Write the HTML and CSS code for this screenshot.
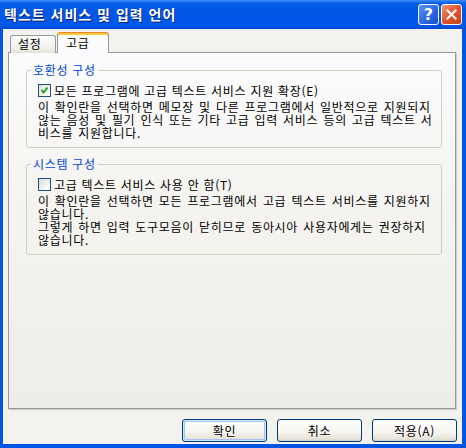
FILE: index.html
```html
<!DOCTYPE html>
<html lang="ko">
<head>
    <meta charset="utf-8">
    <title>텍스트 서비스 및 입력 언어</title>
    <link rel="stylesheet" href="styles.css">
</head>
<body>
    <div class="window">
        <div class="titlebar">
            <span class="title">텍스트 서비스 및 입력 언어</span>
            <div class="caption-buttons">
                <button class="cap help">?</button>
                <button class="cap close">
                    <svg width="21" height="21" viewBox="0 0 21 21">
                        <path d="M6 6 L15 15 M15 6 L6 15" stroke="#fff" stroke-width="2.2" stroke-linecap="square"/>
                    </svg>
                </button>
            </div>
        </div>

        <div class="client">
            <div class="tabs">
                <div class="tab">설정</div>
                <div class="tab selected">고급</div>
            </div>

            <div class="panel">
                <fieldset class="group">
                    <legend>호환성 구성</legend>
                    <div class="group-body">
                        <label class="check">
                            <span class="box">
                                <svg width="11" height="11" viewBox="0 0 11 11">
                                    <path d="M2.5 5 L4.5 7.5 L8.5 2.5" fill="none" stroke="#21a121" stroke-width="2"/>
                                </svg>
                            </span>
                            모든 프로그램에 고급 텍스트 서비스 지원 확장(E)
                        </label>
                        <p>이 확인란을 선택하면 메모장 및 다른 프로그램에서 일반적으로 지원되지<br>않는 음성 및 필기 인식 또는 기타 고급 입력 서비스 등의 고급 텍스트 서<br>비스를 지원합니다.</p>
                    </div>
                </fieldset>

                <fieldset class="group">
                    <legend>시스템 구성</legend>
                    <div class="group-body">
                        <label class="check">
                            <span class="box"></span>
                            고급 텍스트 서비스 사용 안 함(T)
                        </label>
                        <p>이 확인란을 선택하면 모든 프로그램에서 고급 텍스트 서비스를 지원하지<br>않습니다.<br>그렇게 하면 입력 도구모음이 닫히므로 동아시아 사용자에게는 권장하지<br>않습니다.</p>
                    </div>
                </fieldset>
            </div>

            <div class="buttons">
                <button class="btn default">확인</button>
                <button class="btn">취소</button>
                <button class="btn">적용(A)</button>
            </div>
        </div>
    </div>
</body>
</html>
```

FILE: styles.css
```css
html {
    font-family: "Noto Sans CJK KR", "Noto Sans", sans-serif;
    font-size: 12px;
    color: #000;
}

body {
    margin: 0;
    background: #fff;
}

button {
    font-family: inherit;
    font-size: inherit;
    color: inherit;
    padding: 0;
}

.window {
    display: flex;
    flex-direction: column;
    width: 466px;
    height: 448px;
    background: #0055e5;
}

/* --- Title bar --- */
.titlebar {
    display: flex;
    align-items: center;
    justify-content: space-between;
    height: 29px;
    padding: 0 4px 0 4px;
    background: linear-gradient(#3d8ef5 0, #0a5fe8 3px, #0157e6 10px, #0055e5 18px, #0059ec 25px, #0049d4 29px);
}

.title {
    color: #fff;
    font-size: 14px;
    font-weight: bold;
    line-height: 16px;
    letter-spacing: 1px;
    text-shadow: 1px 1px 0 #0a1e6e;
    margin-top: -1px;
}

.caption-buttons {
    display: flex;
    gap: 2px;
}

.cap {
    width: 21px;
    height: 21px;
    border: 1px solid #fff;
    border-radius: 3px;
    color: #fff;
    display: flex;
    align-items: center;
    justify-content: center;
}

.help {
    background: linear-gradient(135deg, #5b95f8, #2a64e0 60%, #1c4fd0);
    font-family: "DejaVu Sans", sans-serif;
    font-size: 16px;
    font-weight: bold;
}

.close {
    background: linear-gradient(135deg, #f1956f, #e0542f 50%, #c9401d);
}

/* --- Client area --- */
.client {
    display: flex;
    flex-direction: column;
    flex: 1;
    margin: 0 4px 4px 3px;
    padding: 4px 6px 1px 5px;
    background: #f3f2ee;
}

.tabs {
    display: flex;
    align-items: flex-end;
    height: 20px;
    padding-left: 2px;
    position: relative;
    z-index: 1;
    margin-bottom: -1px;
}

.tab {
    box-sizing: border-box;
    width: 46px;
    height: 18px;
    padding-left: 7px;
    line-height: 16px;
    letter-spacing: 0.7px;
    border: 1px solid #919b9c;
    border-bottom: none;
    border-radius: 3px 3px 0 0;
    background: linear-gradient(#fefefe, #f1f0ea 70%, #e3e1d8);
}

.tab.selected {
    width: 52px;
    height: 21px;
    padding-left: 8px;
    line-height: 16px;
    border-top: 1px solid #e68b2c;
    box-shadow: inset 0 2px 0 #ffc83c;
    background: #fcfcfe;
    margin-left: 1px;
    padding-top: 2px;
}

.panel {
    flex: 0 0 357px;
    box-sizing: border-box;
    border: 1px solid #919b9c;
    box-shadow: 1px 1px 0 #d0cebf;
    background: linear-gradient(#fcfcfe, #f5f4f0 40%, #eeede7);
    padding: 10px 13px 0 17px;
}

.group {
    margin: 0;
    padding: 0 6px 8px 11px;
    border: 1px solid #d0d0bf;
    border-radius: 3px;
    letter-spacing: 0.7px;
}

.group + .group {
    margin-top: 9px;
}

.group legend {
    color: #0046d5;
    padding: 0 2px;
    margin-left: -7px;
    line-height: 14px;
}

.check {
    display: flex;
    align-items: center;
    gap: 3px;
    margin-top: 7px;
    line-height: 13px;
    white-space: nowrap;
}

.box {
    box-sizing: border-box;
    flex: none;
    width: 13px;
    height: 13px;
    border: 1px solid #1c5180;
    background: linear-gradient(135deg, #dcdcd7, #fbfbf8 80%);
}

.box svg {
    display: block;
}

.group-body p {
    margin: 3px 0 0;
    line-height: 13px;
    white-space: nowrap;
    word-spacing: 1px;
}

/* --- Dialog buttons --- */
.buttons {
    display: flex;
    justify-content: flex-end;
    gap: 10px;
    margin-top: 10px;
    margin-right: -1px;
}

.btn {
    width: 85px;
    height: 23px;
    border: 1px solid #003c74;
    border-radius: 3px;
    background: linear-gradient(#ffffff, #f5f4ee 60%, #e6e3d8 90%, #d6d0c5);
    line-height: 19px;
    letter-spacing: 0.7px;
}

.btn.default {
    box-shadow: inset 0 0 0 1px #cee7ff, inset 0 0 0 2px #a8c2f3;
}
```
